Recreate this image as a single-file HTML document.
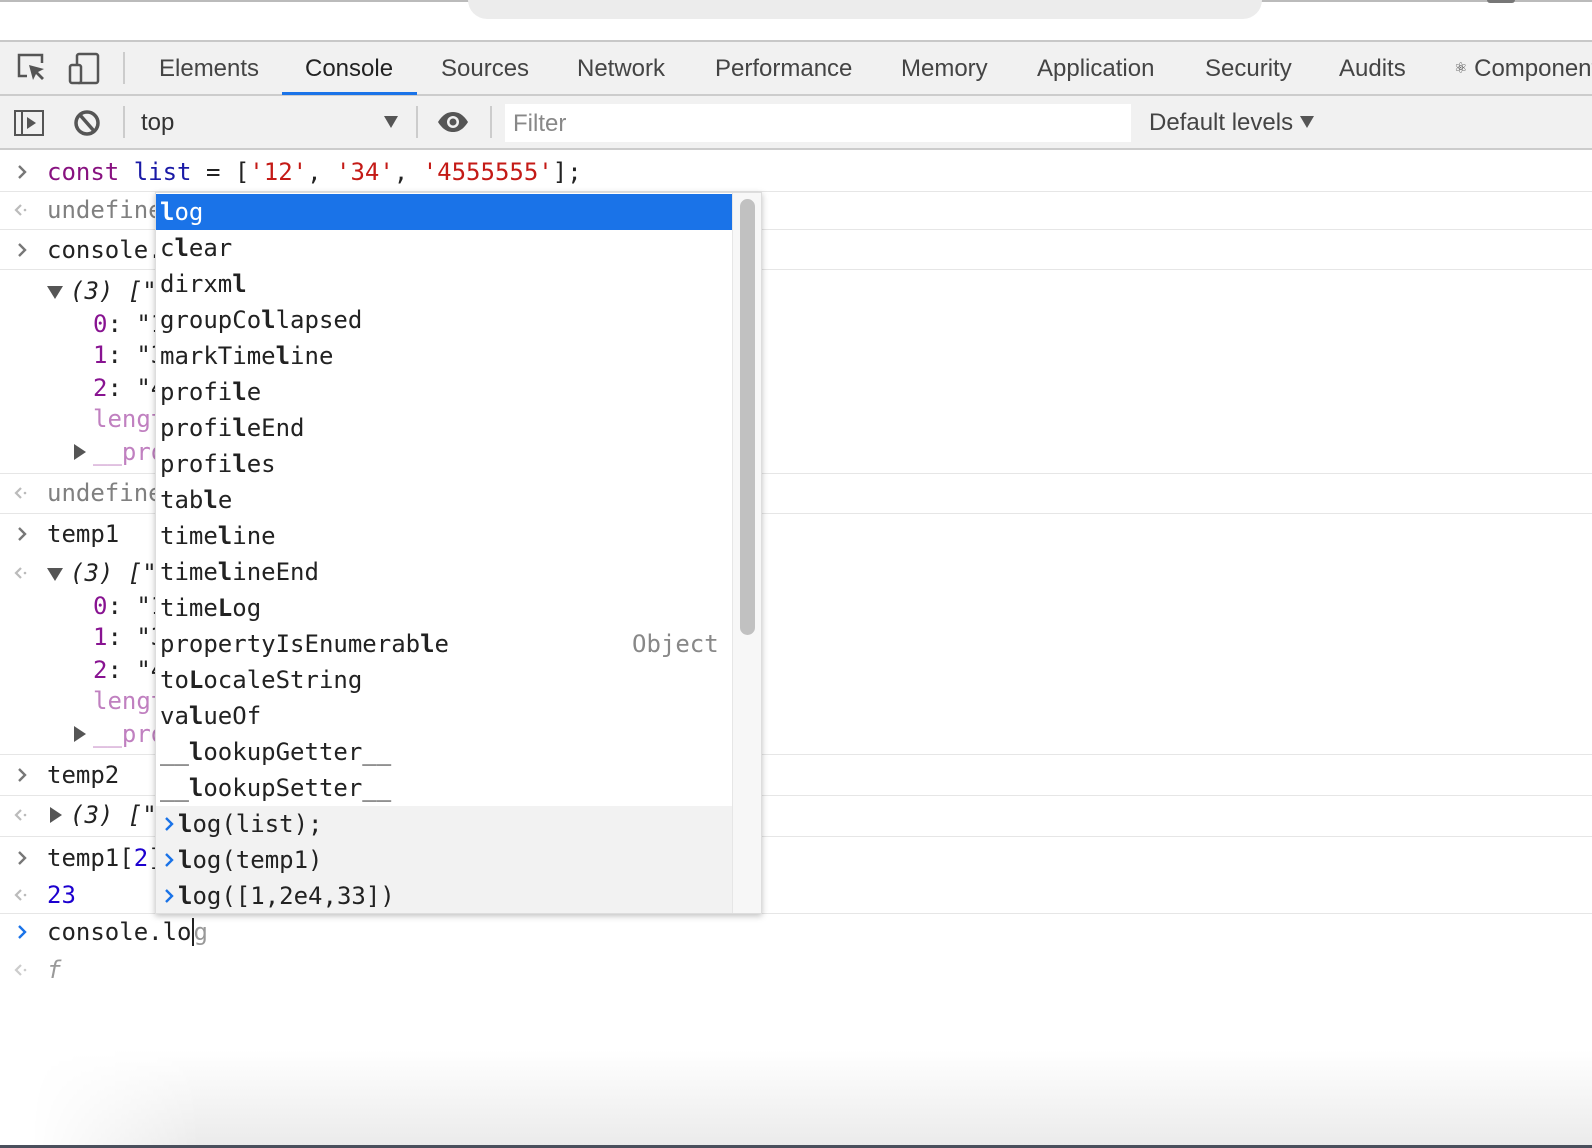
<!DOCTYPE html>
<html><head><meta charset="utf-8">
<style>
*{margin:0;padding:0;box-sizing:border-box}
html,body{width:1592px;height:1148px;overflow:hidden;background:#fff}
body{position:relative;font-family:"Liberation Sans",sans-serif;color:#333}
.a{position:absolute;white-space:pre}
.m{font-family:"DejaVu Sans Mono","Liberation Mono",monospace;font-size:24px;line-height:30px;color:#222}
.t{font-size:24px;color:#444;line-height:30px}
.hl{position:absolute;left:0;width:1592px;height:1px;background:#e6e6e6}
.pur{color:#881280}.blu{color:#1a1aa6}.red{color:#c41a16}.idx{color:#881391}.lt{color:#c080c0}.gr{color:#808080}
.pop{position:absolute;left:155px;top:192px;width:607px;height:722px;background:#fff;border:1px solid #ddd;box-shadow:0 2px 6px rgba(0,0,0,.25);overflow:hidden;z-index:5}
.it{position:absolute;left:4px;font-family:"DejaVu Sans Mono","Liberation Mono",monospace;font-size:24px;line-height:30px;color:#222;white-space:pre}
.it b{font-weight:bold}
.ch{position:absolute;width:14px;height:16px}
</style></head><body>
<svg width="0" height="0" style="position:absolute"><defs>
<symbol id="gt" viewBox="0 0 14 16"><path d="M4 2l6 6-6 6" fill="none" stroke="currentColor" stroke-width="2.4"/></symbol>
<symbol id="lt" viewBox="0 0 14 16"><path d="M8 3L3 8l5 5" fill="none" stroke="currentColor" stroke-width="2.2"/><circle cx="12" cy="8" r="1.3" fill="currentColor"/></symbol>
</defs></svg>
<div class="a" style="left:0;top:0;width:1592px;height:2px;background:#bbb"></div>
<div class="a" style="left:468px;top:0;width:794px;height:19px;background:#ececec;border-radius:0 0 24px 24px"></div>
<div class="a" style="left:1487px;top:0;width:28px;height:3px;background:#777;border-radius:0 0 3px 3px"></div>
<div class="a" style="left:0;top:40px;width:1592px;height:56px;background:#f1f1f1;border-top:2px solid #c8c8c8;border-bottom:2px solid #ccc"></div>
<svg class="a" style="left:16px;top:52px" width="32" height="32" viewBox="0 0 32 32"><path d="M11 24H3V3h23v8" fill="none" stroke="#555" stroke-width="2.5"/><path d="M13 13l4 15 3-6 6 6 2-2-6-6 6-3z" fill="#555"/></svg>
<svg class="a" style="left:68px;top:52px" width="34" height="34" viewBox="0 0 34 34"><rect x="9" y="2" width="21" height="29" fill="none" stroke="#555" stroke-width="2.5" rx="2"/><rect x="2" y="13" width="11" height="18" fill="#f1f1f1" stroke="#555" stroke-width="2.5" rx="2"/></svg>
<div class="a" style="left:123px;top:52px;width:2px;height:32px;background:#ccc"></div>
<div class="a t" style="left:159px;top:54px">Elements</div>
<div class="a t" style="left:305px;top:54px;color:#222">Console</div>
<div class="a" style="left:282px;top:92px;width:135px;height:3px;background:#1a73e8"></div>
<div class="a t" style="left:441px;top:54px">Sources</div>
<div class="a t" style="left:577px;top:54px">Network</div>
<div class="a t" style="left:715px;top:54px">Performance</div>
<div class="a t" style="left:901px;top:54px">Memory</div>
<div class="a t" style="left:1037px;top:54px">Application</div>
<div class="a t" style="left:1205px;top:54px">Security</div>
<div class="a t" style="left:1339px;top:54px">Audits</div>
<div class="a t" style="left:1454px;top:54px"><span style="font-size:15px;vertical-align:3px">⚛</span> Components</div>
<div class="a" style="left:0;top:96px;width:1592px;height:54px;background:#f1f1f1;border-bottom:2px solid #ccc"></div>
<svg class="a" style="left:14px;top:110px" width="30" height="26" viewBox="0 0 30 26"><rect x="1" y="1" width="28" height="24" fill="none" stroke="#555" stroke-width="2"/><path d="M8 2v22" stroke="#555" stroke-width="2"/><path d="M13 7l9 6-9 6z" fill="#555"/></svg>
<svg class="a" style="left:73px;top:109px" width="28" height="28" viewBox="0 0 28 28"><circle cx="14" cy="14" r="11" fill="none" stroke="#555" stroke-width="3.5"/><path d="M7 6l14 16" stroke="#555" stroke-width="3.5"/></svg>
<div class="a" style="left:123px;top:106px;width:2px;height:32px;background:#ccc"></div>
<div class="a t" style="left:141px;top:108px;color:#333">top</div>
<div class="a" style="left:384px;top:116px;width:0;height:0;border-left:7px solid transparent;border-right:7px solid transparent;border-top:12px solid #555"></div>
<div class="a" style="left:416px;top:106px;width:2px;height:32px;background:#ccc"></div>
<svg class="a" style="left:437px;top:111px" width="32" height="22" viewBox="0 0 32 22"><path d="M1 11C6 3 11 1 16 1s10 2 15 10c-5 8-10 10-15 10S6 19 1 11z" fill="#555"/><circle cx="16" cy="11" r="6" fill="#f1f1f1"/><circle cx="16" cy="11" r="3.5" fill="#555"/></svg>
<div class="a" style="left:490px;top:106px;width:2px;height:32px;background:#ccc"></div>
<div class="a" style="left:505px;top:104px;width:626px;height:38px;background:#fff"></div>
<div class="a t" style="left:513px;top:109px;color:#888">Filter</div>
<div class="a t" style="left:1149px;top:108px;color:#444">Default levels</div>
<div class="a" style="left:1300px;top:116px;width:0;height:0;border-left:7px solid transparent;border-right:7px solid transparent;border-top:12px solid #555"></div>
<div class="hl" style="top:191px"></div><div class="hl" style="top:229px"></div><div class="hl" style="top:269px"></div>
<div class="hl" style="top:473px"></div><div class="hl" style="top:513px"></div><div class="hl" style="top:754px"></div>
<div class="hl" style="top:795px"></div><div class="hl" style="top:836px"></div><div class="hl" style="top:913px"></div>
<svg class="ch" style="left:15px;top:164px;color:#777"><use href="#gt"/></svg>
<svg class="ch" style="left:13px;top:202px;color:#bbb"><use href="#lt"/></svg>
<svg class="ch" style="left:15px;top:242px;color:#777"><use href="#gt"/></svg>
<svg class="ch" style="left:13px;top:485px;color:#bbb"><use href="#lt"/></svg>
<svg class="ch" style="left:15px;top:526px;color:#777"><use href="#gt"/></svg>
<svg class="ch" style="left:13px;top:565px;color:#bbb"><use href="#lt"/></svg>
<svg class="ch" style="left:15px;top:767px;color:#777"><use href="#gt"/></svg>
<svg class="ch" style="left:13px;top:807px;color:#bbb"><use href="#lt"/></svg>
<svg class="ch" style="left:15px;top:850px;color:#777"><use href="#gt"/></svg>
<svg class="ch" style="left:13px;top:887px;color:#bbb"><use href="#lt"/></svg>
<svg class="ch" style="left:15px;top:924px;color:#1a73e8"><use href="#gt"/></svg>
<svg class="ch" style="left:13px;top:962px;color:#ccc"><use href="#lt"/></svg>
<div class="a m" style="left:47px;top:157px"><span class="pur">const</span> <span class="blu">list</span> = [<span class="red">'12'</span>, <span class="red">'34'</span>, <span class="red">'4555555'</span>];</div>
<div class="a m gr" style="left:47px;top:195px">undefined</div>
<div class="a m" style="left:47px;top:235px">console.log(list);</div>
<div class="a" style="left:47px;top:286px;border-left:8px solid transparent;border-right:8px solid transparent;border-top:13px solid #555"></div>
<div class="a m" style="left:70px;top:276px;font-style:italic">(3) ["</div>
<div class="a m" style="left:93px;top:309px"><span class="idx">0</span>: "12"</div>
<div class="a m" style="left:93px;top:340px"><span class="idx">1</span>: "34"</div>
<div class="a m" style="left:93px;top:373px"><span class="idx">2</span>: "4555555"</div>
<div class="a m lt" style="left:93px;top:404px">length: 3</div>
<div class="a" style="left:74px;top:444px;border-top:8px solid transparent;border-bottom:8px solid transparent;border-left:12px solid #555"></div>
<div class="a m lt" style="left:93px;top:437px">__proto__</div>
<div class="a m gr" style="left:47px;top:478px">undefined</div>
<div class="a m" style="left:47px;top:519px">temp1</div>
<div class="a" style="left:47px;top:568px;border-left:8px solid transparent;border-right:8px solid transparent;border-top:13px solid #555"></div>
<div class="a m" style="left:70px;top:558px;font-style:italic">(3) ["</div>
<div class="a m" style="left:93px;top:591px"><span class="idx">0</span>: "12"</div>
<div class="a m" style="left:93px;top:622px"><span class="idx">1</span>: "34"</div>
<div class="a m" style="left:93px;top:655px"><span class="idx">2</span>: "4555555"</div>
<div class="a m lt" style="left:93px;top:686px">length: 3</div>
<div class="a" style="left:74px;top:726px;border-top:8px solid transparent;border-bottom:8px solid transparent;border-left:12px solid #555"></div>
<div class="a m lt" style="left:93px;top:719px">__proto__</div>
<div class="a m" style="left:47px;top:760px">temp2</div>
<div class="a" style="left:50px;top:807px;border-top:8px solid transparent;border-bottom:8px solid transparent;border-left:12px solid #555"></div>
<div class="a m" style="left:70px;top:800px;font-style:italic">(3) ["</div>
<div class="a m" style="left:47px;top:843px">temp1[<span style="color:#1c00cf">2</span>]</div>
<div class="a m" style="left:47px;top:880px;color:#1c00cf">23</div>
<div class="a m" style="left:47px;top:917px">console.lo<span style="border-left:2px solid #222;color:#999">g</span></div>
<div class="a m" style="left:47px;top:955px;font-style:italic;color:#999">f</div>
<div class="pop">
 <div style="position:absolute;left:0;top:1px;width:576px;height:36px;background:#1a73e8"></div>
 <div style="position:absolute;left:0;top:613px;width:576px;height:110px;background:#f2f2f2"></div>
 <div style="position:absolute;left:576px;top:0;width:31px;height:722px;background:#f7f7f7;border-left:1px solid #e6e6e6"></div>
 <div style="position:absolute;left:584px;top:6px;width:15px;height:436px;background:#c1c1c1;border-radius:8px"></div>
 <div class="it" style="top:4px;color:#fff"><b>l</b>og</div>
 <div class="it" style="top:40px">c<b>l</b>ear</div>
 <div class="it" style="top:76px">dirxm<b>l</b></div>
 <div class="it" style="top:112px">groupCo<b>l</b>lapsed</div>
 <div class="it" style="top:148px">markTime<b>l</b>ine</div>
 <div class="it" style="top:184px">profi<b>l</b>e</div>
 <div class="it" style="top:220px">profi<b>l</b>eEnd</div>
 <div class="it" style="top:256px">profi<b>l</b>es</div>
 <div class="it" style="top:292px">tab<b>l</b>e</div>
 <div class="it" style="top:328px">time<b>l</b>ine</div>
 <div class="it" style="top:364px">time<b>l</b>ineEnd</div>
 <div class="it" style="top:400px">time<b>L</b>og</div>
 <div class="it" style="top:436px">propertyIsEnumerab<b>l</b>e</div>
 <div class="it" style="top:436px;left:476px;color:#888">Object</div>
 <div class="it" style="top:472px">to<b>L</b>ocaleString</div>
 <div class="it" style="top:508px">va<b>l</b>ueOf</div>
 <div class="it" style="top:544px">__<b>l</b>ookupGetter__</div>
 <div class="it" style="top:580px">__<b>l</b>ookupSetter__</div>
 <svg class="ch" style="left:6px;top:623px;color:#1a73e8"><use href="#gt"/></svg>
 <svg class="ch" style="left:6px;top:659px;color:#1a73e8"><use href="#gt"/></svg>
 <svg class="ch" style="left:6px;top:695px;color:#1a73e8"><use href="#gt"/></svg>
 <div class="it" style="top:616px;left:22px"><b>l</b>og(list);</div>
 <div class="it" style="top:652px;left:22px"><b>l</b>og(temp1)</div>
 <div class="it" style="top:688px;left:22px"><b>l</b>og([1,2e4,33])</div>
</div>
<div class="a" style="left:0;top:1050px;width:1592px;height:95px;background:linear-gradient(to bottom,#fff,#ebebeb);-webkit-mask-image:linear-gradient(to right,transparent 30px,#000 200px)"></div>
<div class="a" style="left:0;top:1145px;width:1592px;height:3px;background:#4a4f5c"></div>
</body></html>
